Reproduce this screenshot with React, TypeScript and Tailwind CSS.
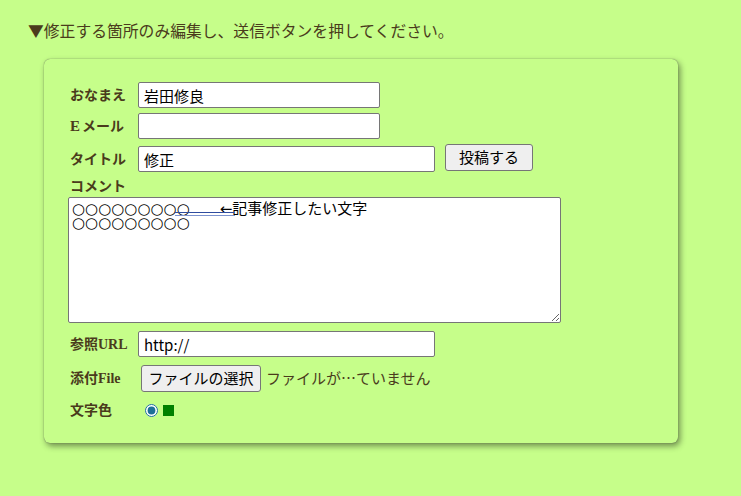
import React from "react";

const labelCls =
  "w-[70px] shrink-0 pl-[2px] text-[14px] font-bold text-[#4a3b1c] [font-family:'Liberation_Serif','Noto_Sans_CJK_JP',serif]";
const inputCls =
  "h-[26px] rounded-[2px] border border-[#767676] bg-white px-[5px] text-[15px] text-black outline-none [font-family:'Noto_Sans_CJK_JP',sans-serif]";

const App = () => {
  const noop = () => {};

  return (
    <div className="min-h-screen bg-[#c6fe8a] pl-[28px] pt-[22px]">
      <p className="text-[15.8px] leading-[18px] text-[#4a3b1c] [font-family:'Noto_Sans_CJK_JP',serif]">
        ▼修正する箇所のみ編集し、送信ボタンを押してください。
      </p>

      <form className="ml-[16px] mt-[19px] h-[384px] w-[634px] rounded-[6px] bg-[#c6fe8a] pl-[24px] pt-[23px] shadow-[0_0_1px_#555,2px_3px_6px_rgba(0,0,0,0.45)]">
        {/* おなまえ */}
        <div className="flex h-[26px] items-center">
          <span className={labelCls}>おなまえ</span>
          <input className={`${inputCls} w-[242px]`} value="岩田修良" onChange={noop} />
        </div>

        {/* Eメール */}
        <div className="mt-[5px] flex h-[26px] items-center">
          <span className={labelCls}>
            <span className="mr-[2px] text-[15px]">E</span>メール
          </span>
          <input className={`${inputCls} w-[242px]`} value="" onChange={noop} />
        </div>

        {/* タイトル */}
        <div className="mt-[7px] flex h-[26px] items-center">
          <span className={labelCls}>タイトル</span>
          <input className={`${inputCls} w-[297px]`} value="修正" onChange={noop} />
          <button
            type="button"
            className="mb-[3px] ml-[10px] h-[27px] w-[88px] rounded-[3px] border border-[#767676] bg-[#efefef] text-[15px] text-black [font-family:'Noto_Sans_CJK_JP',sans-serif]"
          >
            投稿する
          </button>
        </div>

        {/* コメント */}
        <div className={`${labelCls} mt-[6px] h-[18px] leading-[18px]`}>コメント</div>
        <div className="relative mt-[1px] h-[126px] w-[493px]">
          <textarea
            className="block h-[126px] w-[493px] rounded-[2px] border border-[#767676] bg-white px-[3px] pt-[4px] text-[15px] leading-[14px] text-black outline-none [font-family:'DejaVu_Sans','Noto_Sans_CJK_JP',sans-serif]"
            value={"○○○○○○○○○　　←記事修正したい文字\n○○○○○○○○○"}
            onChange={noop}
          />
          <div className="pointer-events-none absolute left-[107px] top-[15px] h-[4px] w-[59px] border-b border-t border-b-[#7d93cf] border-t-[#2f4c9e]" />
        </div>

        {/* 参照URL */}
        <div className="mt-[8px] flex h-[26px] items-center">
          <span className={labelCls}>参照URL</span>
          <input className={`${inputCls} w-[297px]`} value="http://" onChange={noop} />
        </div>

        {/* 添付File */}
        <div className="mt-[8px] flex h-[27px] items-center">
          <span className={labelCls}>添付File</span>
          <button
            type="button"
            className="ml-[3px] h-[27px] w-[120px] rounded-[3px] border border-[#767676] bg-[#efefef] text-[15px] text-black [font-family:'Noto_Sans_CJK_JP',sans-serif]"
          >
            ファイルの選択
          </button>
          <span className="ml-[5px] text-[15px] text-[#4a3b1c] [font-family:'Noto_Sans_CJK_JP',sans-serif]">
            ファイルが…ていません
          </span>
        </div>

        {/* 文字色 */}
        <div className="mt-[9px] flex h-[18px] items-center">
          <span className={labelCls}>文字色</span>
          <input
            type="radio"
            checked
            onChange={noop}
            className="m-0 ml-[7px] h-[13px] w-[13px] accent-[#1d6f97]"
          />
          <span className="ml-[5px] inline-block h-[11px] w-[11px] bg-[#008000]" />
        </div>
      </form>
    </div>
  );
};

export default App;
